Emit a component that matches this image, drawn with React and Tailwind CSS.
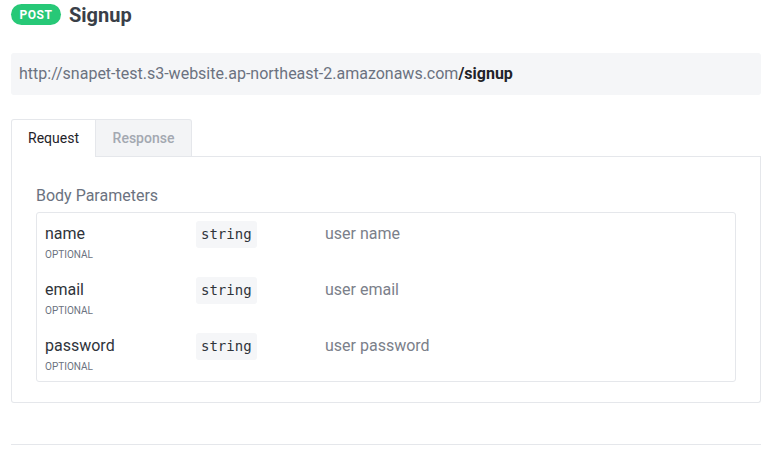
import React from "react";

const rows = [
  { name: "name", desc: "user name" },
  { name: "email", desc: "user email" },
  { name: "password", desc: "user password" },
];

export default function App() {
  return (
    <div className="w-[765px] h-[449px] bg-white pl-[11px] pr-[4px] pt-[4px] font-['Roboto',sans-serif] overflow-hidden">
      <div className="flex items-center gap-[8px] h-[21px]">
        <span className="h-[21px] w-[50px] rounded-full bg-[#27c877] text-white text-[12px] font-bold tracking-[0.5px] flex items-center justify-center">
          POST
        </span>
        <span className="text-[20px] font-bold text-[#3a3f48] leading-none">Signup</span>
      </div>

      <div className="mt-[28px] h-[42px] rounded-[3px] bg-[#f5f6f8] flex items-center px-[8px] text-[16px] text-[#6b7280]">
        http://snapet-test.s3-website.ap-northeast-2.amazonaws.com
        <span className="font-bold text-[#1f2329]">/signup</span>
      </div>

      <div className="mt-[24px] flex">
        <div className="w-[85px] h-[38px] border border-b-0 border-[#e5e7eb] rounded-tl-[3px] flex items-center justify-center text-[14px] text-[#1f2329] bg-white">
          Request
        </div>
        <div className="w-[96px] h-[38px] border border-l-0 border-[#e5e7eb] rounded-tr-[3px] bg-[#f3f4f6] flex items-center justify-center text-[14px] font-medium text-[#a3a8b1]">
          Response
        </div>
        <div className="flex-1 border-b border-[#e5e7eb]" />
      </div>

      <div className="border border-t-0 border-[#e5e7eb] rounded-b-[3px] px-[24px] pt-[28px] pb-[20px]">
        <div className="text-[16px] text-[#6b7280] leading-[22px]">Body Parameters</div>
        <div className="mt-[5px] border border-[#e5e7eb] rounded-[3px]">
          {rows.map((r) => (
            <div key={r.name} className="flex h-[56px] px-[8px] pt-[9px]">
              <div className="w-[151px]">
                <div className="text-[16px] leading-[24px] text-[#2f343b]">{r.name}</div>
                <div className="text-[10px] leading-[14px] text-[#6b7280] uppercase mt-[2px]">Optional</div>
              </div>
              <div className="w-[129px]">
                <span className="inline-block h-[27px] mt-[-1px] px-[5px] rounded-[3px] bg-[#f5f6f8] font-['DejaVu_Sans_Mono',monospace] text-[14px] leading-[27px] text-[#2f343b]">
                  string
                </span>
              </div>
              <div className="text-[16px] leading-[24px] text-[#7b808a]">{r.desc}</div>
            </div>
          ))}
        </div>
      </div>

      <div className="mt-[41px] border-t border-[#e5e7eb]" />
    </div>
  );
}
